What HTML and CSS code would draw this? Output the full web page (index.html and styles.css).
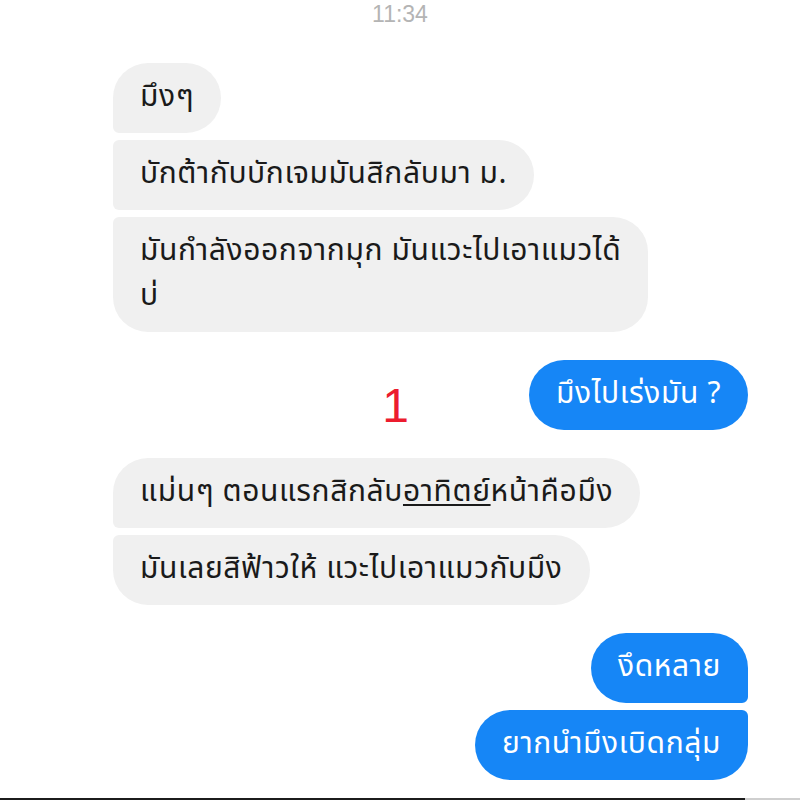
FILE: index.html
```html
<!DOCTYPE html>
<html lang="th">
<head>
<meta charset="utf-8">
<link rel="stylesheet" href="styles.css">
</head>
<body>
<div class="chat">
  <div class="time">11:34</div>
  <div class="group left">
    <div class="bubble in first">มึงๆ</div>
    <div class="bubble in mid">บักต้ากับบักเจมมันสิกลับมา ม.</div>
    <div class="bubble in last">มันกำลังออกจากมุก มันแวะไปเอาแมวได้<br>บ่</div>
  </div>
  <div class="group right note-row">
    <span class="note">1</span>
    <div class="bubble out single">มึงไปเร่งมัน ?</div>
  </div>
  <div class="group left">
    <div class="bubble in first">แม่นๆ ตอนแรกสิกลับ<u>อาทิตย์</u>หน้าคือมึง</div>
    <div class="bubble in last">มันเลยสิฟ้าวให้ แวะไปเอาแมวกับมึง</div>
  </div>
  <div class="group right">
    <div class="bubble out first">งึดหลาย</div>
    <div class="bubble out last">ยากนำมึงเบิดกลุ่ม</div>
  </div>
</div>
<div class="bottom-line"></div>
</body>
</html>
```
FILE: styles.css
```css
html, body {
  margin: 0;
  padding: 0;
  background: #ffffff;
}
body {
  width: 800px;
  height: 800px;
  overflow: hidden;
  font-family: "Noto Sans Thai", "Noto Sans", sans-serif;
}
.chat {
  height: 798px;
  box-sizing: border-box;
  padding: 0 52px 0 113px;
  display: flex;
  flex-direction: column;
}
.time {
  font-family: "Liberation Sans", Arial, sans-serif;
  font-size: 23px;
  color: #b4b4b4;
  text-align: center;
  margin-left: -113px;
  margin-right: -52px;
  height: 28px;
  line-height: 28px;
  margin-bottom: 35px;
}
.group {
  display: flex;
  flex-direction: column;
  gap: 7px;
  margin-bottom: 28px;
}
.group.left { align-items: flex-start; }
.group.right { align-items: flex-end; }
.note-row {
  flex-direction: row;
  justify-content: flex-end;
  align-items: center;
  gap: 120px;
}
.note {
  font-family: "Liberation Sans", Arial, sans-serif;
  font-size: 48px;
  color: #ec1c2e;
  line-height: 1;
  margin-top: 0;
}
.bubble {
  font-size: 30px;
  line-height: 45px;
  letter-spacing: 0.6px;
  padding: 12px 27px 13px 27px;
  border-radius: 35px;
  white-space: nowrap;
}
.bubble u {
  text-decoration-thickness: 2px;
  text-underline-offset: 3px;
}
.in {
  background: #f0f0f0;
  color: #1a1a1a;
}
.out {
  background: #1686f6;
  color: #ffffff;
}
.in.first { border-radius: 35px 35px 35px 6px; }
.in.mid { border-radius: 6px 35px 35px 6px; }
.in.last { border-radius: 6px 35px 35px 35px; }
.out.first { border-radius: 35px 35px 6px 35px; }
.out.last { border-radius: 35px 6px 35px 35px; }
.bottom-line {
  height: 2px;
  background: linear-gradient(to right, #1c1c1c 0, #1c1c1c 745px, #cfcfcf 745px);
}
```
